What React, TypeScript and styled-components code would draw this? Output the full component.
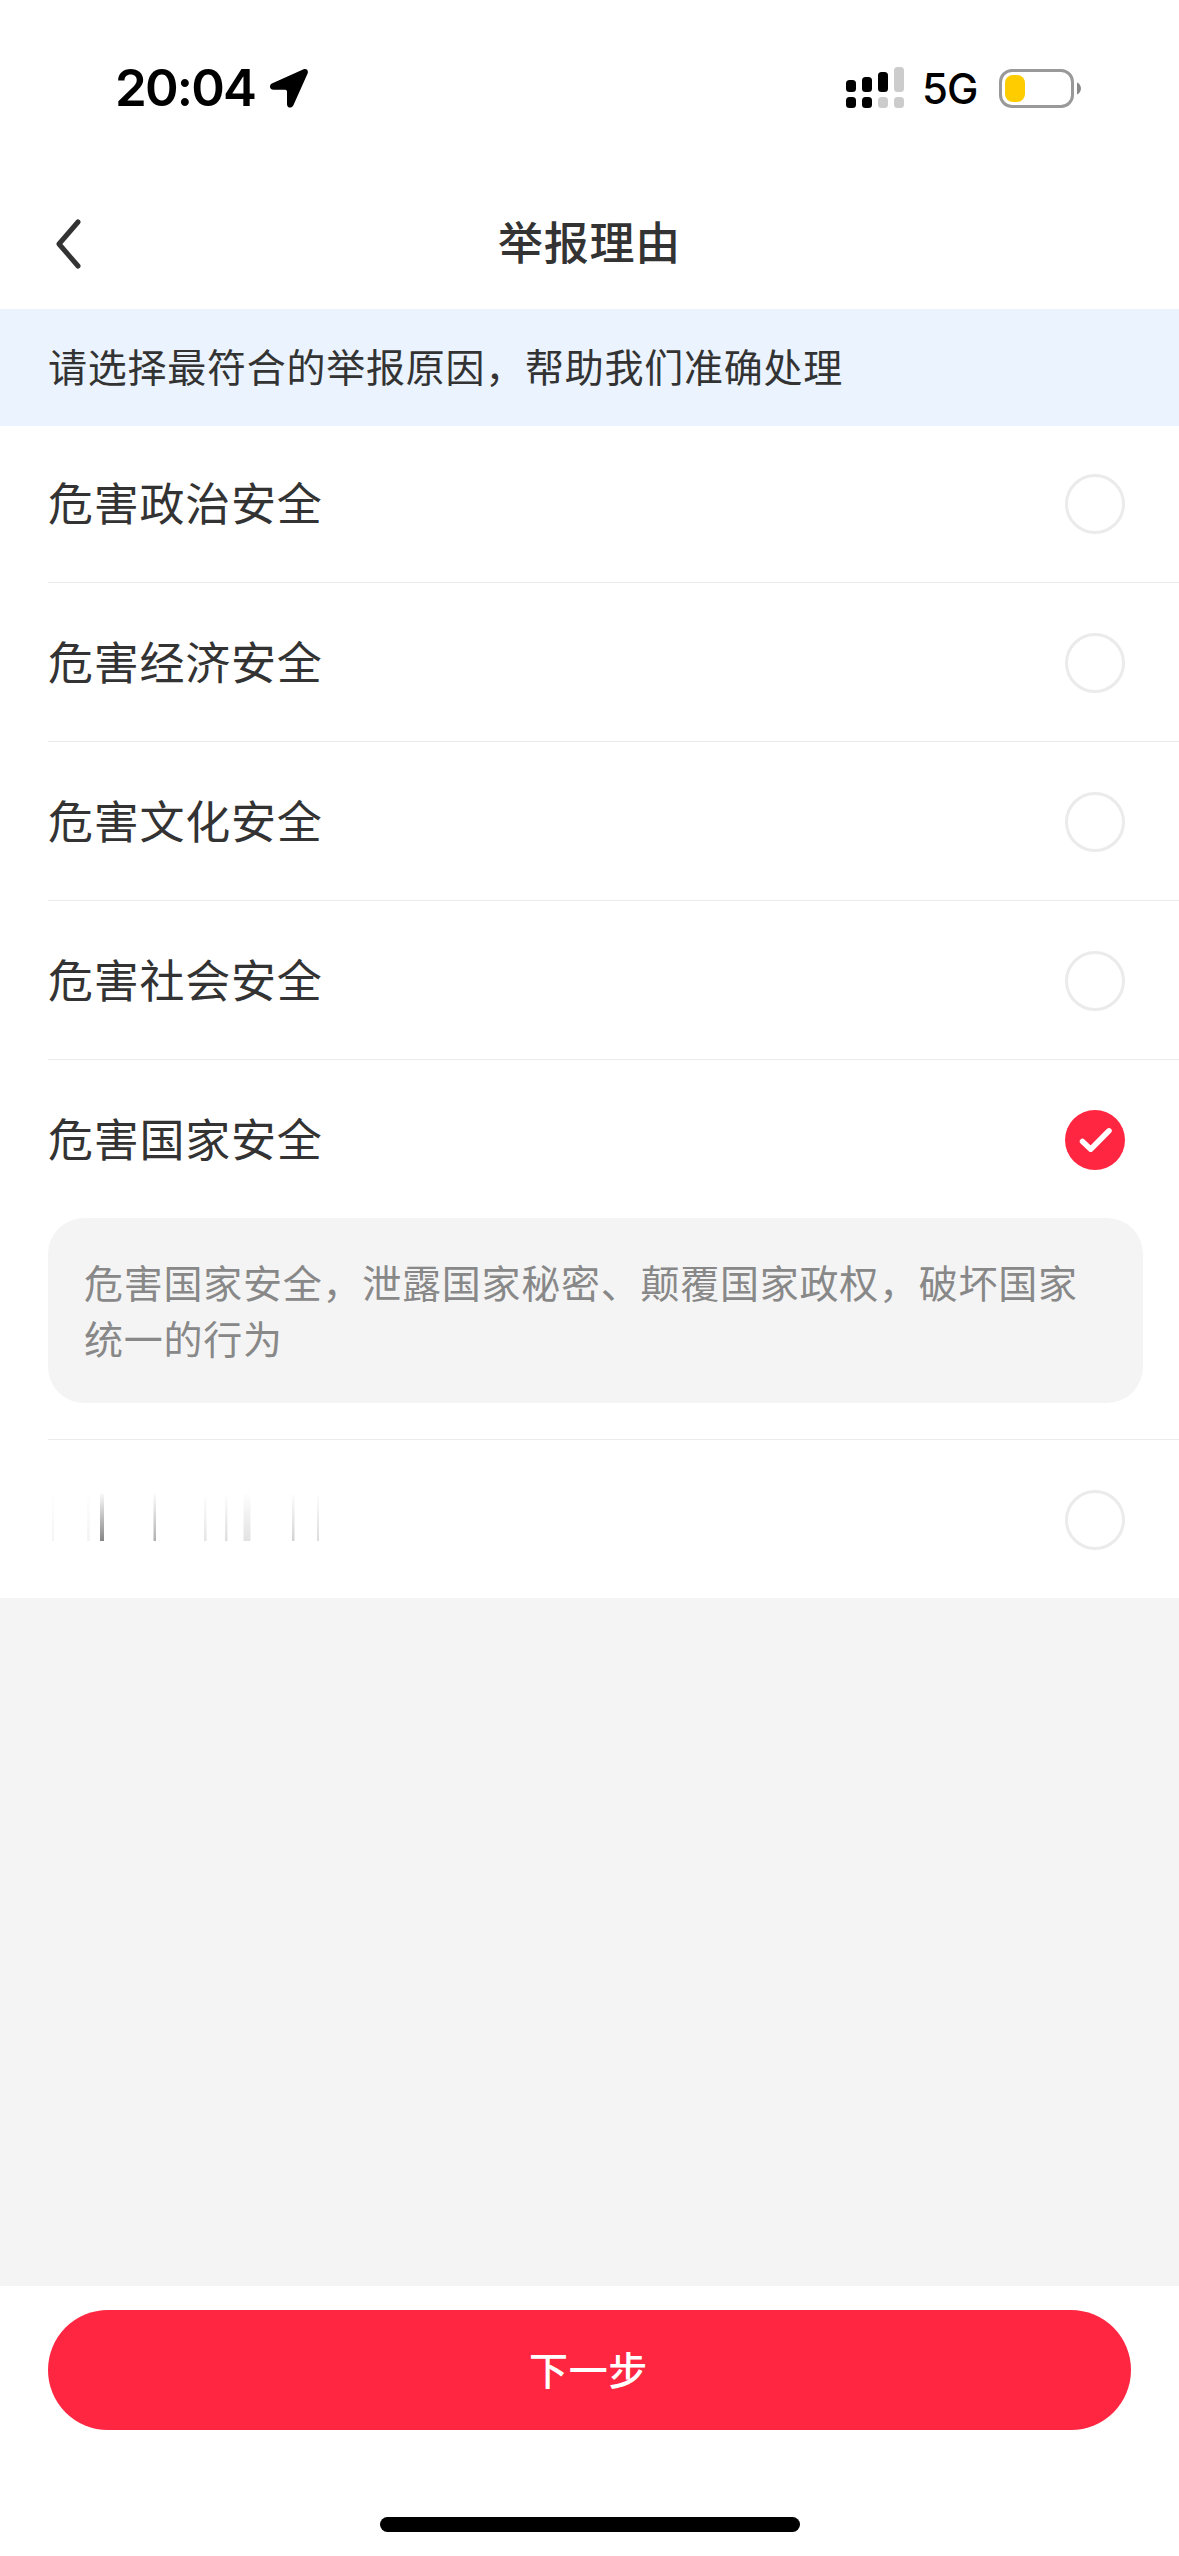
import React, { useState } from "react";
import styled, { createGlobalStyle } from "styled-components";

const cjk = `"Noto Sans CJK SC", "Noto Sans", sans-serif`;

const GlobalStyle = createGlobalStyle`
  *, *::before, *::after { box-sizing: border-box; }
  body { margin: 0; background: #fff; }
`;

const Screen = styled.div`
  width: 1179px;
  height: 2556px;
  display: flex;
  flex-direction: column;
  overflow: hidden;
  background: #fff;
  color: #333;
  font-family: ${cjk};
`;

const StatusBar = styled.header`
  height: 177px;
  padding: 56px 98px 0 115px;
  display: flex;
  align-items: flex-start;
  justify-content: space-between;
  color: #000;
  font-family: Inter, sans-serif;
`;

const StatusGroup = styled.div`
  display: flex;
  align-items: center;
  height: 64px;
`;

const Clock = styled.span`
  width: 155px;
  font-size: 51px;
  line-height: 64px;
  font-weight: 600;
  letter-spacing: -1.8px;
  white-space: nowrap;
`;

const Network = styled.span`
  width: 77px;
  margin-left: 18px;
  padding-top: 2px;
  font-size: 42px;
  line-height: 64px;
  font-weight: 500;
  letter-spacing: -1px;
`;

const NavBar = styled.nav`
  height: 132px;
  padding: 0 48px;
  display: grid;
  grid-template-columns: 60px 1fr 60px;
  align-items: center;
`;

const BackButton = styled.button`
  display: flex;
  padding: 1px 0 0 5px;
  border: 0;
  background: none;
`;

const Title = styled.h1`
  margin: 0;
  padding-bottom: 4px;
  text-align: center;
  font-size: 45px;
  line-height: 66px;
  font-weight: 500;
  letter-spacing: 0.8px;
`;

const Notice = styled.p`
  height: 117px;
  margin: 0;
  padding: 0 48px;
  background: #ebf3fe;
  font-size: 39px;
  line-height: 113px;
  letter-spacing: 0.75px;
`;

const Options = styled.ul`
  margin: 0;
  padding: 0;
  list-style: none;
`;

const Option = styled.li`
  margin-left: 48px;
  & + & { border-top: 1px solid #ebebeb; }
`;

const OptionRow = styled.div<{ $first: boolean }>`
  height: ${(p) => (p.$first ? 156 : 158)}px;
  padding: ${(p) => (p.$first ? 48 : 50)}px 54px 0 0;
  display: flex;
  align-items: flex-start;
  justify-content: space-between;
`;

const Label = styled.span`
  font-size: 45px;
  line-height: 56px;
  letter-spacing: 0.75px;
`;

const Radio = styled.button<{ $checked: boolean }>`
  width: 60px;
  height: 60px;
  padding: 0;
  display: flex;
  border-radius: 50%;
  border: ${(p) => (p.$checked ? "0" : "3px solid #ebebeb")};
  background: ${(p) => (p.$checked ? "#ff2641" : "#fff")};
`;

const Detail = styled.p`
  width: 1095px;
  height: 185px;
  margin: 0 0 36px;
  padding: 35px 36px 0;
  border-radius: 36px;
  background: #f4f4f4;
  color: #888;
  font-size: 39px;
  line-height: 56px;
  letter-spacing: 0.75px;
`;

const Filler = styled.div`
  flex: 1;
  background: #f4f4f4;
`;

const Footer = styled.footer`
  height: 270px;
  padding: 24px 48px;
  display: flex;
  flex-direction: column;
  align-items: center;
  justify-content: space-between;
`;

const NextButton = styled.button`
  width: 100%;
  height: 120px;
  padding: 0 2px 4px 0;
  border: 0;
  border-radius: 60px;
  background: #ff2642;
  color: #fff;
  font-family: ${cjk};
  font-size: 39px;
  font-weight: 500;
  letter-spacing: 0.6px;
`;

const HomeIndicator = styled.div`
  width: 420px;
  height: 15px;
  border-radius: 8px;
  background: #000;
`;

const LocationIcon = () => (
  <svg width="38" height="39" viewBox="0 0 38 39">
    <path d="M33.6 .3 C36.6 -.8 38.7 1.6 37.6 4.4 L23.4 36.2 C21.8 39.8 17 39.2 17 35.2 L17 22.6 Q17 20.8 15.2 20.8 L3.4 20.8 C-.5 20.8 -1.4 15.9 2.4 14.2 Z" />
  </svg>
);

const SignalIcon = () => (
  <svg width="58" height="42" viewBox="0 0 58 42">
    <rect x="0" y="13" width="10" height="12" rx="3.5" />
    <rect x="16" y="10" width="10" height="15" rx="3.5" />
    <rect x="32" y="5" width="10" height="20" rx="3.5" />
    <rect x="48" y="0" width="10" height="25" rx="3.5" fill="#ccc" />
    <rect x="0" y="30" width="10" height="11" rx="3.5" />
    <rect x="16" y="30" width="10" height="11" rx="3.5" />
    <rect x="32" y="30" width="10" height="11" rx="3.5" fill="#ccc" />
    <rect x="48" y="30" width="10" height="11" rx="3.5" fill="#ccc" />
  </svg>
);

const BatteryIcon = () => (
  <svg width="82" height="39" viewBox="0 0 82 39">
    <rect x="1.5" y="1.5" width="72" height="36" rx="11.5" fill="none" stroke="#999" strokeWidth="3" />
    <rect x="6" y="6" width="20" height="27" rx="8" fill="#fc0" />
    <path d="M78 13.5 C83.3 15.5 83.3 23.5 78 25.5 Z" fill="#888" />
  </svg>
);

const BackIcon = () => (
  <svg width="30" height="54" viewBox="0 0 30 54" fill="none">
    <path d="M25 5 L6 27 L25 49" stroke="#333" strokeWidth="5" strokeLinecap="round" strokeLinejoin="round" />
  </svg>
);

const CheckIcon = () => (
  <svg width="60" height="60" viewBox="0 0 60 60" fill="none">
    <path d="M17.5 31.5 L25.7 39.2 L44 20.8" stroke="#fff" strokeWidth="5.5" strokeLinecap="round" strokeLinejoin="round" />
  </svg>
);

const streaks = [
  { x: 22, w: 2, o: 0.05 },
  { x: 57, w: 3, o: 0.05 },
  { x: 70, w: 4, o: 0.55 },
  { x: 123.5, w: 2.5, o: 0.36 },
  { x: 174, w: 2.5, o: 0.12 },
  { x: 195, w: 2.5, o: 0.15 },
  { x: 213.5, w: 7, o: 0.13 },
  { x: 262, w: 2.5, o: 0.2 },
  { x: 287, w: 2, o: 0.16 },
];

const FadedLabel = () => (
  <svg width="300" height="60" viewBox="18 0 300 60">
    <defs>
      <linearGradient id="fade" x1="0" y1="0" x2="0" y2="1">
        <stop offset="0" stopColor="#222" stopOpacity="0.05" />
        <stop offset="1" stopColor="#222" />
      </linearGradient>
    </defs>
    {streaks.map((s) => (
      <rect key={s.x} x={s.x} y="4" width={s.w} height="47" fill="url(#fade)" opacity={s.o} />
    ))}
  </svg>
);

const reasons = [
  { label: "危害政治安全" },
  { label: "危害经济安全" },
  { label: "危害文化安全" },
  { label: "危害社会安全" },
  { label: "危害国家安全", detail: "危害国家安全，泄露国家秘密、颠覆国家政权，破坏国家统一的行为" },
  { label: "" },
];

export default function App() {
  const [selected, setSelected] = useState(4);
  return (
    <>
      <GlobalStyle />
      <Screen>
        <StatusBar>
          <StatusGroup>
            <Clock>20:04</Clock>
            <LocationIcon />
          </StatusGroup>
          <StatusGroup>
            <SignalIcon />
            <Network>5G</Network>
            <BatteryIcon />
          </StatusGroup>
        </StatusBar>
        <NavBar>
          <BackButton>
            <BackIcon />
          </BackButton>
          <Title>举报理由</Title>
        </NavBar>
        <Notice>请选择最符合的举报原因，帮助我们准确处理</Notice>
        <Options>
          {reasons.map((r, i) => (
            <Option key={i}>
              <OptionRow $first={i === 0}>
                {r.label ? <Label>{r.label}</Label> : <FadedLabel />}
                <Radio $checked={selected === i} onClick={() => setSelected(i)}>
                  {selected === i && <CheckIcon />}
                </Radio>
              </OptionRow>
              {selected === i && r.detail && <Detail>{r.detail}</Detail>}
            </Option>
          ))}
        </Options>
        <Filler />
        <Footer>
          <NextButton>下一步</NextButton>
          <HomeIndicator />
        </Footer>
      </Screen>
    </>
  );
}
